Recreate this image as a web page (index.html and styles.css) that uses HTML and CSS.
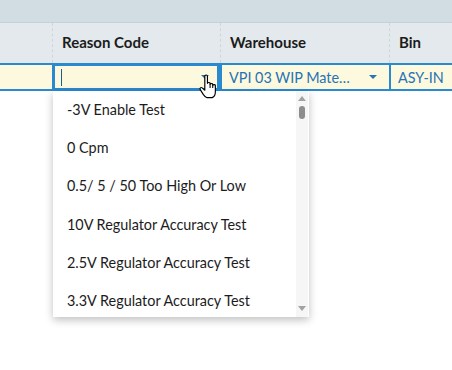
FILE: index.html
```html
<!doctype html>
<html lang="en">
<head>
    <meta charset="UTF-8">
    <title>Reason Code</title>
    <link rel="stylesheet" href="styles.css">
</head>
<body>
    <div class="toolbar"></div>

    <div class="grid header">
        <div class="cell"></div>
        <div class="cell">Reason Code</div>
        <div class="cell">Warehouse</div>
        <div class="cell">Bin</div>
    </div>

    <div class="grid row">
        <div class="cell"></div>
        <div class="cell editing">
            <span class="caret"></span>
            <span class="arrow"></span>
        </div>
        <div class="cell value">
            <span class="text">VPI 03 WIP Mate…</span>
            <span class="arrow"></span>
        </div>
        <div class="cell value">ASY-IN</div>
    </div>

    <div class="dropdown">
        <ul class="options">
            <li>-3V Enable Test</li>
            <li>0 Cpm</li>
            <li>0.5/ 5 / 50 Too High Or Low</li>
            <li>10V Regulator Accuracy Test</li>
            <li>2.5V Regulator Accuracy Test</li>
            <li>3.3V Regulator Accuracy Test</li>
        </ul>
        <div class="scrollbar">
            <span class="up"></span>
            <span class="thumb"></span>
            <span class="down"></span>
        </div>
    </div>

    <!-- mouse pointer over the dropdown arrow -->
    <svg class="pointer" width="19" height="25" viewBox="0 0 18 23">
        <path d="M5.5 1.5 C5.5 0.3 8 0.3 8 1.5 L8 8.5 C8 7.4 10.5 7.4 10.5 8.5 L10.5 9.5 C10.5 8.4 13 8.4 13 9.5 L13 10.5 C13 9.4 15.5 9.4 15.5 10.5 L15.5 16.5 C15.5 19.5 14 21.5 12.5 22 L7.5 22 C6 22 5 20.5 4 19 L1.2 14.5 C0.4 13.3 1.8 11.8 3 12.8 L5.5 15 Z"
              fill="#fff" stroke="#000" stroke-width="1.1" stroke-linejoin="round"/>
        <path d="M10.5 9.5 V13 M13 10.5 V13" stroke="#000" stroke-width="1" fill="none"/>
    </svg>
</body>
</html>
```

FILE: styles.css
```css
body {
    margin: 0;
    font-family: 'Lato', 'Liberation Sans', sans-serif;
    font-size: 14.4px;
    color: #1c1c1c;
    background-color: #fff;
    position: relative;
    height: 370px;
    overflow: hidden;
}
.toolbar {
    height: 22px;
    background-color: #d2dde3;
    border-bottom: 1px solid #c6d1d7;
}
.grid {
    display: grid;
    grid-template-columns: 52px 168px 169px 1fr;
}
.header {
    height: 40px;
    background-color: #e3e9ed;
}
.header .cell {
    display: flex;
    align-items: center;
    padding-left: 9px;
    padding-bottom: 2px;
    font-size: 15px;
    font-weight: bold;
    border-left: 1px dashed #cfd6da;
}
.header .cell:first-child {
    border-left: none;
}
.row {
    height: 24px;
    background-color: #fdf9df;
    border-top: 2px solid #2a8ad0;
    border-bottom: 2px solid #2a8ad0;
}
.row .cell {
    display: flex;
    align-items: center;
    padding-left: 9px;
}
.row .value {
    color: #2773b3;
    border-left: 2px solid #2a8ad0;
    padding-left: 7px;
}
.row .cell.editing {
    margin: -2px 0;
    border: 3px solid #2a8ad0;
    padding-left: 6px;
    background-color: #fdf9df;
}
.caret {
    width: 1px;
    height: 17px;
    background-color: #1c5d8a;
}
.row .text {
    flex: 1;
}
.arrow {
    width: 0;
    height: 0;
    border-left: 4px solid transparent;
    border-right: 4px solid transparent;
    border-top: 4px solid #2773b3;
    margin-right: 12px;
    margin-left: auto;
}
.editing .arrow {
    margin-right: 8px;
}
.dropdown {
    position: absolute;
    left: 53px;
    top: 91px;
    width: 256px;
    height: 226px;
    background-color: #fff;
    box-shadow: 0 3px 8px rgba(0,0,0,0.25);
    display: flex;
    overflow: hidden;
}
.options {
    list-style: none;
    margin: 0;
    padding: 0;
    flex: 1;
}
.options li {
    height: 38.2px;
    line-height: 38px;
    padding-left: 14px;
    white-space: nowrap;
}
.scrollbar {
    width: 12px;
    background-color: #f6f6f6;
    display: flex;
    flex-direction: column;
    align-items: center;
    padding: 5px 0 6px;
    margin-right: 1px;
}
.up, .down {
    width: 0;
    height: 0;
    border-left: 4px solid transparent;
    border-right: 4px solid transparent;
}
.up {
    border-bottom: 5px solid #a3a3a3;
}
.down {
    border-top: 5px solid #a3a3a3;
    margin-top: auto;
}
.thumb {
    width: 6px;
    height: 13px;
    border-radius: 3px;
    background-color: #8d8d8d;
    margin-top: 5px;
}
.pointer {
    position: absolute;
    left: 199px;
    top: 74px;
}
```
